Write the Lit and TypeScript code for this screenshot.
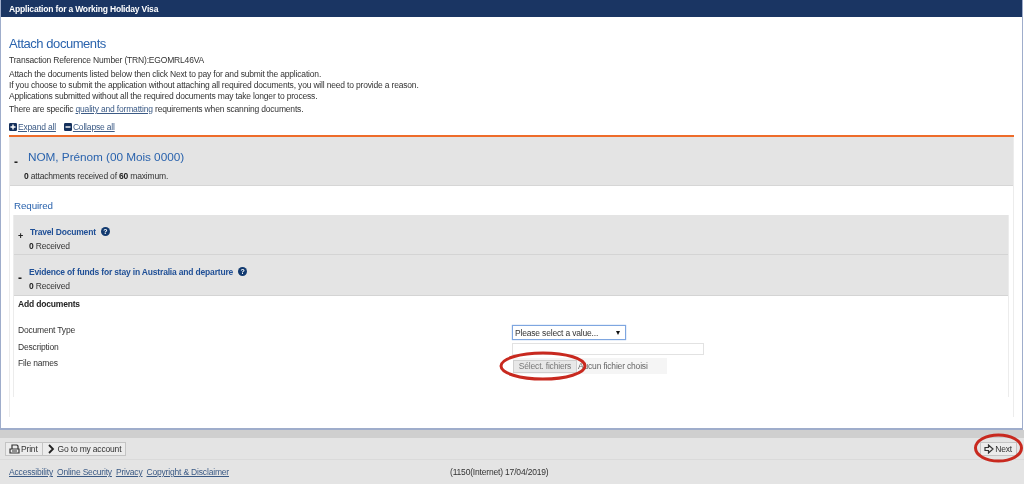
import { LitElement, html, css } from "lit";
import { customElement } from "lit/decorators.js";

@customElement("app-root")
export class AppRoot extends LitElement {
  static styles = css`
    :host { display: block; width: 1024px; height: 484px; overflow: hidden; background: #e4e4e4; font-family: "Liberation Sans", Arial, sans-serif; font-size: 8.5px; letter-spacing: -0.18px; color: #333; position: relative; filter: blur(0.4px); }
    a { color: #3b5a85; text-decoration: underline; }
    .frame { width: 1023px; height: 430px; box-sizing: border-box; background: #fff; border-style: solid; border-width: 0 1px 2px 1px; border-color: #9fadcb; display: flex; flex-direction: column; overflow: hidden; box-shadow: 1px 0 0 #fff; }
    .top { height: 17px; flex: none; background: #1a3563; color: #fff; font-weight: bold; line-height: 18px; padding-left: 8px; }
    .main { padding: 20px 8px 11px 8px; flex: 1; display: flex; flex-direction: column; min-height: 0; }
    h1 { margin: 0; font-weight: normal; font-size: 13px; letter-spacing: -0.45px; line-height: 14px; color: #2a63ad; }
    .p { line-height: 11px; white-space: nowrap; }
    .trn { margin-top: 4px; }
    .intro { margin-top: 3px; }
    .spec { margin-top: 2px; }
    .tools { margin-top: 6px; display: flex; gap: 8px; height: 12px; align-items: center; }
    .tools a { display: flex; align-items: center; gap: 1px; }
    .tools svg { width: 8px; height: 8px; display: block; }
    .rule { height: 2px; background: #ee6c2a; margin-top: 2px; flex: none; }
    .panel { flex: 1; border-left: 1px solid #ececec; border-right: 1px solid #ececec; display: flex; flex-direction: column; min-height: 0; }
    .person { height: 49px; flex: none; background: #e4e4e4; border-bottom: 1px solid #d6d6d6; box-sizing: border-box; position: relative; padding: 13px 0 0 18px; }
    .person .t { font-size: 11.8px; letter-spacing: -0.05px; line-height: 14px; color: #2a63ad; }
    .person .s { margin-top: 7px; margin-left: -4px; line-height: 11px; color: #333; }
    .tog { position: absolute; left: 4px; font-weight: bold; color: #222; font-size: 12px; line-height: 10px; }
    .person .tog { top: 20px; }
    b { color: #222; }
    .body { padding: 0 4px 20px 4px; flex: 1; display: flex; flex-direction: column; min-height: 0; }
    h2 { margin: 13px 0 0 0; font-weight: normal; font-size: 9.8px; letter-spacing: -0.1px; line-height: 13px; color: #2a63ad; }
    .rows { margin: 3px 0 0 -1px; border-left: 1px solid #ececec; border-right: 1px solid #ececec; flex: 1; }
    .row { background: #e4e4e4; height: 40px; border-bottom: 1px solid #d4d4d4; position: relative; box-sizing: border-box; padding: 12px 0 0 15px; }
    .row.tall { height: 41px; }
    .row .n { display: flex; align-items: center; gap: 5px; font-weight: bold; line-height: 11px; color: #1f4f96; }
    .row .n.first { margin-left: 1px; }
    .row .r { margin-top: 3px; line-height: 11px; }
    .row .tog { top: 16px; font-size: 9px; }
    .row.tall .tog { top: 18px; font-size: 12px; }
    .q { width: 9px; height: 9px; border-radius: 50%; background: #123a70; color: #fff; font-size: 7px; letter-spacing: 0; line-height: 9px; text-align: center; font-weight: bold; margin-top: -2px; }
    .add { padding: 3px 0 0 4px; position: relative; }
    .add .h { font-weight: bold; color: #222; line-height: 11px; }
    .form { display: grid; grid-template-columns: 494px auto; row-gap: 3px; margin-top: 15px; align-items: start; }
    .form .l { line-height: 11px; }
    .form .l.up { margin-top: -1px; }
    .sel { width: 114px; height: 15px; box-sizing: border-box; border: 1px solid #7ea6e0; box-shadow: 0 0 1px #7ea6e0; display: flex; align-items: center; justify-content: space-between; padding: 0 5px 0 2px; color: #333; background: #fff; }
    .sel i { width: 0; height: 0; border-left: 2.5px solid transparent; border-right: 2.5px solid transparent; border-top: 4px solid #111; }
    .inp { width: 192px; height: 12px; box-sizing: border-box; border: 1px solid #e2e2e2; }
    .file { display: flex; width: 154px; height: 16px; margin-left: 1px; background: #f5f5f5; align-items: center; color: #666; }
    .file span { box-sizing: border-box; height: 13px; width: 64px; background: #e8e8e8; border: 1px solid #cfcfcf; color: #777; text-align: center; line-height: 11px; margin-right: 1px; }
    .grey { height: 8px; background: #cfcfcf; }
    .bar { height: 21px; display: flex; align-items: center; justify-content: space-between; padding: 0 7px 0 5px; border-bottom: 1px solid #dadada; }
    .btns { display: flex; }
    .btn { height: 14px; box-sizing: border-box; background: #ececec; border: 1px solid #c4c4c4; display: flex; align-items: center; gap: 1px; padding: 0 4px 0 3px; color: #333; }
    .btn + .btn { border-left: 0; }
    .btn svg { display: block; }
    .foot { height: 24px; display: grid; grid-template-columns: 441px auto; align-items: center; padding-left: 9px; }
    .links { display: flex; gap: 4px; }
    .ring { position: absolute; left: 0; top: 0; pointer-events: none; }
  `;

  render() {
    return html`
      <div class="frame">
        <div class="top">Application for a Working Holiday Visa</div>
        <div class="main">
          <h1>Attach documents</h1>
          <div class="p trn">Transaction Reference Number (TRN):EGOMRL46VA</div>
          <div class="intro">
            <div class="p">Attach the documents listed below then click Next to pay for and submit the application.</div>
            <div class="p">If you choose to submit the application without attaching all required documents, you will need to provide a reason.</div>
            <div class="p">Applications submitted without all the required documents may take longer to process.</div>
          </div>
          <div class="p spec">There are specific <a>quality and formatting</a> requirements when scanning documents.</div>
          <div class="tools">
            <a><svg viewBox="0 0 8 8"><rect width="8" height="8" rx="1.2" fill="#15305c"/><path d="M1.5 4h5M4 1.5v5" stroke="#fff" stroke-width="1.4"/></svg>Expand all</a>
            <a><svg viewBox="0 0 8 8"><rect width="8" height="8" rx="1.2" fill="#15305c"/><path d="M1.5 4h5" stroke="#fff" stroke-width="1.4"/></svg>Collapse all</a>
          </div>
          <div class="rule"></div>
          <div class="panel">
            <div class="person">
              <span class="tog">-</span>
              <div class="t">NOM, Prénom (00 Mois 0000)</div>
              <div class="s"><b>0</b> attachments received of <b>60</b> maximum.</div>
            </div>
            <div class="body">
              <h2>Required</h2>
              <div class="rows">
                <div class="row">
                  <span class="tog">+</span>
                  <div class="n first">Travel Document <span class="q">?</span></div>
                  <div class="r"><b>0</b> Received</div>
                </div>
                <div class="row tall">
                  <span class="tog">-</span>
                  <div class="n">Evidence of funds for stay in Australia and departure <span class="q">?</span></div>
                  <div class="r"><b>0</b> Received</div>
                </div>
                <div class="add">
                  <div class="h">Add documents</div>
                  <div class="form">
                    <div class="l">Document Type</div>
                    <div class="sel">Please select a value...<i></i></div>
                    <div class="l up">Description</div>
                    <div class="inp"></div>
                    <div class="l">File names</div>
                    <div class="file"><span>Sélect. fichiers</span>Aucun fichier choisi</div>
                  </div>
                </div>
              </div>
            </div>
          </div>
        </div>
      </div>
      <div class="grey"></div>
      <div class="bar">
        <div class="btns">
          <div class="btn"><svg width="11" height="10" viewBox="0 0 11 10" fill="none" stroke="#333" stroke-width="1.2"><path d="M3 5V1h5l1 1v3M1 5h9v4H1zM3 7h5"/></svg>Print</div>
          <div class="btn"><svg width="11" height="10" viewBox="0 0 11 10" fill="none" stroke="#222" stroke-width="1.8"><path d="M3 1l4 4-4 4"/></svg>Go to my account</div>
        </div>
        <div class="btn"><svg width="10" height="10" viewBox="0 0 10 10" fill="none" stroke="#333" stroke-width="1.2"><path d="M1 3.5h3.5V1L9 5 4.5 9V6.5H1z"/></svg>Next</div>
      </div>
      <div class="foot">
        <div class="links"><a>Accessibility</a><a>Online Security</a><a>Privacy</a><a>Copyright &amp; Disclaimer</a></div>
        <div>(1150(Internet) 17/04/2019)</div>
      </div>
      <svg class="ring" width="1024" height="484" fill="none" stroke="#c8291f" stroke-width="3">
        <ellipse cx="543" cy="366" rx="42" ry="13"/>
        <ellipse cx="998.5" cy="448" rx="23" ry="13"/>
      </svg>
    `;
  }
}
